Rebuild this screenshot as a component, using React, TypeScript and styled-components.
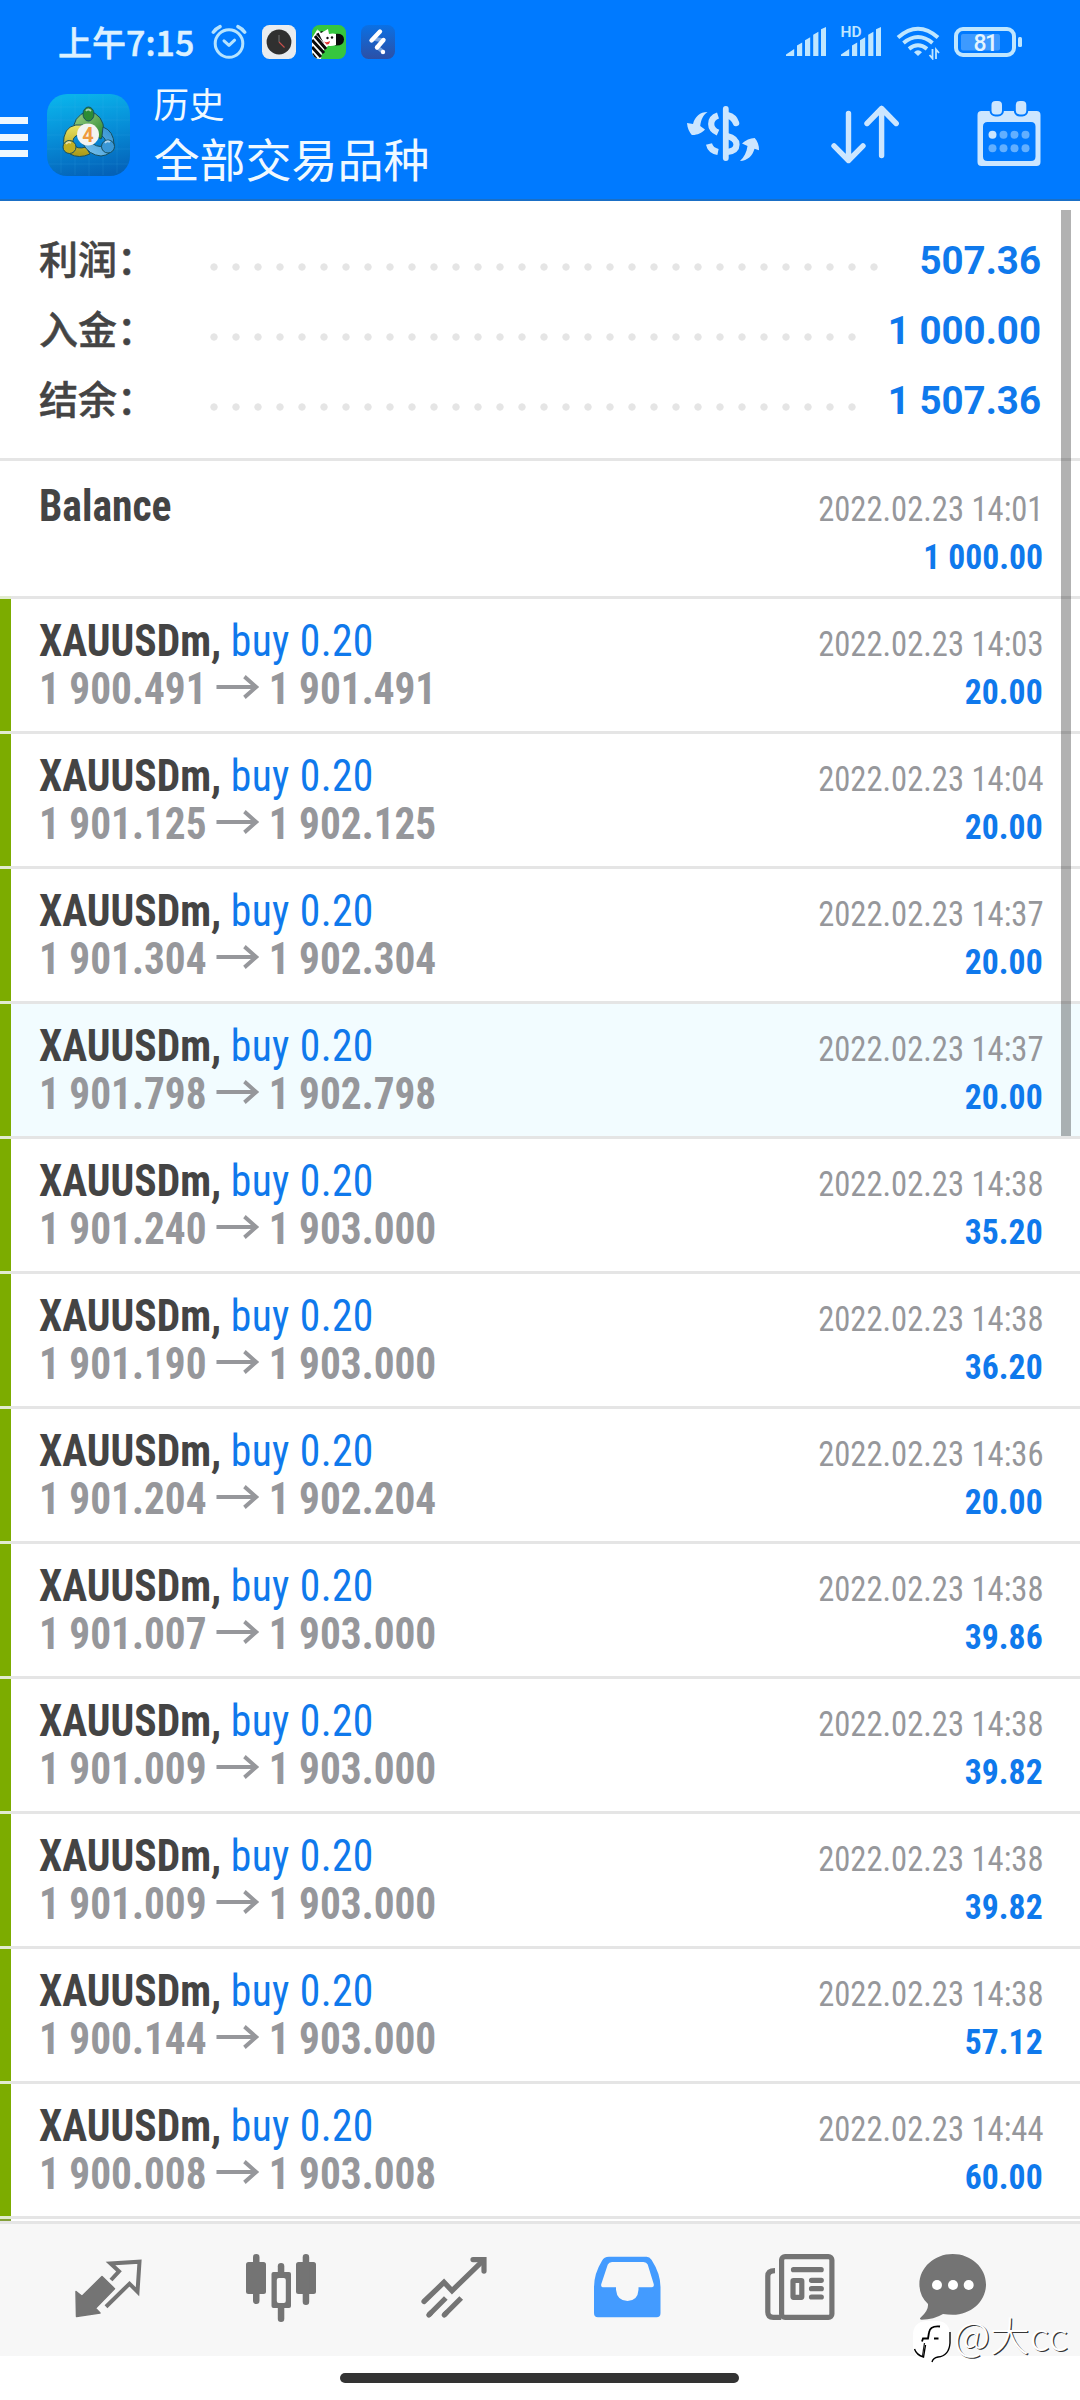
import React from "react";
import styled, { createGlobalStyle } from "styled-components";

const SANS = `Roboto, "Noto Sans CJK SC", sans-serif`;
const CJK = `"Noto Sans CJK SC", Roboto, sans-serif`;
const BLUE = "#0f79ec";
const LINE = "#e5e5e5";
const ICE = "#cce6ff";
const NAV = "#747474";

const GlobalStyle = createGlobalStyle`
  *, *::before, *::after { box-sizing: border-box; }
  body { margin: 0; background: #fff; }
  svg { display: block; flex: none; }
`;

const Screen = styled.div`
  position: relative;
  display: flex;
  flex-direction: column;
  width: 1080px;
  height: 2400px;
  overflow: hidden;
  background: #fff;
  font-family: ${SANS};
`;

/* ---------- top ---------- */

const Header = styled.header`
  height: 201px;
  background: #007aff;
  border-bottom: 2px solid #1a6fc6;
`;

const StatusBar = styled.div`
  display: flex;
  align-items: center;
  justify-content: space-between;
  height: 84px;
  padding: 0 58px 0 58px;
`;

const StatusGroup = styled.div<{ $gap: number }>`
  display: flex;
  align-items: center;
  gap: ${(p) => p.$gap}px;
`;

const Time = styled.span`
  width: 137px;
  font: 500 34px/50px ${CJK};
  -webkit-text-stroke: 0.5px #dcf1ff;
  color: #dcf1ff;
  white-space: nowrap;
`;

const HeaderBar = styled.div`
  display: flex;
  align-items: flex-start;
  height: 115px;
`;

const Menu = styled.div`
  display: flex;
  flex-direction: column;
  gap: 9.5px;
  width: 47px;
  padding-top: 33px;
`;

const MenuLine = styled.span`
  width: 27.5px;
  height: 7px;
  background: #eef8ff;
`;

const AppIcon = styled.svg`
  margin-top: 10px;
`;

const Titles = styled.div`
  flex: 1;
  padding-left: 23.5px;
  color: #f0f9ff;
  font-family: ${CJK};
  white-space: nowrap;
`;

const Caption = styled.div`
  font-size: 35.5px;
  line-height: 37px;
`;

const Title = styled.div`
  padding-top: 5px;
  font-size: 46px;
  line-height: 62px;
`;

const Tools = styled.div`
  display: flex;
  gap: 68.5px;
  padding: 10px 35.5px 0 0;
`;

/* ---------- summary ---------- */

const Summary = styled.section`
  height: 260px;
  padding: 21px 39px 0 39px;
  border-bottom: 3px solid ${LINE};
`;

const SummaryRow = styled.div`
  display: flex;
  align-items: baseline;
  height: 70px;
`;

const Label = styled.span`
  width: 170.5px;
  font: 500 39px/70px ${CJK};
  -webkit-text-stroke: 0.5px #444;
  color: #444;
`;

const Dots = styled.span`
  flex: 1;
  align-self: flex-start;
  height: 8px;
  margin: 41px 30px 0 0;
  background: radial-gradient(circle at 4px 4px, ${LINE} 3.3px, transparent 4px) 0 0 / 22px 8px repeat-x;
`;

const Total = styled.span`
  font: 700 38.5px/70px ${SANS};
  color: ${BLUE};
  white-space: pre;
`;

/* ---------- deals ---------- */

const List = styled.main`
  display: flex;
  flex-direction: column;
  height: 1760px;
  overflow: hidden;
`;

const Row = styled.div<{ $tall?: boolean; $selected?: boolean }>`
  display: flex;
  flex: none;
  height: ${(p) => (p.$tall ? 138 : 135)}px;
  background: ${(p) => (p.$selected ? "#f2fcff" : "#fff")};
`;

const Strip = styled.span<{ $color: string }>`
  width: 11px;
  background: ${(p) => p.$color};
  border-bottom: 3px solid #e1ebcf;
`;

const Cell = styled.div<{ $tall?: boolean }>`
  flex: 1;
  padding: ${(p) => (p.$tall ? 21 : 18)}px 38px 0 28px;
  border-bottom: 3px solid ${LINE};
  font-stretch: 75%;
`;

const Line = styled.div`
  display: flex;
  align-items: baseline;
  height: 48px;
  font-size: 44px;
  line-height: 48px;
  white-space: pre;

  /* keeps both lines on the same baseline when the left side is empty */
  &::before {
    content: "\\200b";
    width: 0;
  }
`;

const Symbol = styled.span`
  font-weight: 700;
  color: #444;
  transform: scaleX(0.945);
  transform-origin: left;
`;

const Side = styled.span`
  font-weight: 400;
  letter-spacing: 0.4px;
  color: ${BLUE};
`;

const Stamp = styled.span`
  margin: 0 -1.5px 0 auto;
  font-size: 35.5px;
  color: #96979b;
  transform: scaleX(0.918);
  transform-origin: right;
`;

const Prices = styled.span`
  display: flex;
  align-items: baseline;
  font-weight: 700;
  color: #96979b;
  transform: scaleX(0.938);
  transform-origin: left;
`;

const PriceArrow = styled.svg`
  align-self: flex-start;
  margin: 10px 9.5px 0 10.8px;
`;

const Profit = styled.span`
  margin: 0 -1px 0 auto;
  font-size: 35.75px;
  font-weight: 700;
  color: ${BLUE};
  transform: scaleX(0.942);
  transform-origin: right;
`;

const NextRowEdge = styled.span`
  width: 11px;
  height: 2px;
  background: #84a03a;
`;

const Scrollbar = styled.div`
  position: absolute;
  top: 210px;
  right: 9px;
  width: 10px;
  height: 926px;
  background: rgba(0, 0, 0, 0.3);
`;

/* ---------- bottom ---------- */

const NavBar = styled.nav`
  display: flex;
  align-items: center;
  height: 135px;
  padding: 0 0 4px 21.5px;
  background: #f7f7f7;
  border-top: 3px solid ${LINE};
`;

const Tab = styled.span<{ $w?: number }>`
  display: flex;
  justify-content: center;
  width: ${(p) => p.$w ?? 173}px;
`;

const Gesture = styled.footer`
  flex: 1;
  display: flex;
  justify-content: center;
  align-items: flex-start;
  padding: 17px 1px 0 0;
`;

const GestureBar = styled.span`
  width: 399px;
  height: 10px;
  border-radius: 5px;
  background: #333;
`;

const Watermark = styled.div`
  position: absolute;
  left: 912px;
  top: 2318px;
  display: flex;
  align-items: flex-start;
  gap: 2px;
  font: 300 39.5px/31px ${CJK};
  color: #fff;
  text-shadow: 1.2px 1.2px 0.6px rgba(0, 0, 0, 0.8);
  white-space: nowrap;
`;

const AlarmIcon = () => (
  <svg width="36" height="36" viewBox="211 25 36 36" fill="none" stroke="#b5e3ff" strokeLinecap="round">
    <circle cx="229" cy="44.5" r="13.8" strokeWidth="3" />
    <path d="M224 41.8l5 4.6 5.6-5.2" strokeWidth="3" strokeLinejoin="round" />
    <path d="M213.3 33.2q2.8-3.8 6.8-5.6M244.7 33.2q-2.8-3.8-6.8-5.6" strokeWidth="3.4" />
  </svg>
);

const ClockIcon = () => (
  <svg width="34" height="34" viewBox="0 0 34 34">
    <rect width="34" height="34" rx="7.5" fill="#e9ecef" />
    <circle cx="17" cy="17" r="12.4" fill="#303030" />
    <path d="M17 17V10" stroke="#555" strokeWidth="1.8" />
    <path d="M17 17l5.5 5.5" stroke="#c9504c" strokeWidth="1.1" />
  </svg>
);

const ZebraIcon = () => (
  <svg width="34" height="34" viewBox="0 0 34 34">
    <clipPath id="zebra"><rect width="34" height="34" rx="7.5" /></clipPath>
    <g clipPath="url(#zebra)">
      <rect width="34" height="34" fill="#36c63f" />
      <path d="M0 13l5-8 8 5 3 11-6 6-1 7H0z" fill="#fff" />
      <path d="M0 15l12 13M0 22l9 10M3 11l11 13M0 29l4 5" stroke="#0b0b0b" strokeWidth="3" />
      <path d="M4 9l6-3 5 4-3 8z" fill="#0b0b0b" />
      <path d="M23 9q9-1 9 5.500t-9 6z" fill="#0b0b0b" />
      <path d="M5 4l4 4 7-4 1 5q4-1 7 0v11q-6 2-11 0l-4-7z" fill="#fff" />
      <circle cx="15.500" cy="13" r="1.200" fill="#111" />
      <circle cx="20" cy="12.500" r="1.200" fill="#111" />
      <path d="M12 16.500q3 1.500 6-.5-.5 4-3.500 3.500z" fill="#e33434" />
    </g>
  </svg>
);

const FlashIcon = () => (
  <svg width="34" height="34" viewBox="0 0 34 34" strokeLinecap="round">
    <defs>
      <linearGradient id="flash" x1="0" y1="0" x2="0" y2="1">
        <stop offset="0" stopColor="#0a70e4" />
        <stop offset="1" stopColor="#2c50a6" />
      </linearGradient>
    </defs>
    <rect width="34" height="34" rx="7.5" fill="url(#flash)" />
    <path d="M14 14l6 1M16 22l5 4" stroke="#7aa6e4" strokeWidth="4" />
    <path d="M10.5 15.5l8.5-9M16 22.5l6.5-7.5" stroke="#fff" strokeWidth="4.4" />
    <circle cx="22" cy="27" r="2.2" fill="#fff" />
  </svg>
);

const SignalIcon = ({ hd }: { hd?: boolean }) => (
  <svg width="41" height="34" viewBox="0 0 41 34" fill="#bfe6ff">
    <path d="M0 31V29.500L8.200 24V31zM11 31V20.500l5.200-3V31zM19 31V15.200l5.200-3V31zM27.200 31V9.800l5.200-3V31zM35 31V4.200L40 2V31z" />
    {hd && (
      <text x="-0.500" y="12.400" fontFamily="Roboto, sans-serif" fontSize="15.500" fontWeight="600">HD</text>
    )}
  </svg>
);

const WifiIcon = () => (
  <svg width="44" height="36" viewBox="895 25 44 36" fill="none" stroke="#bfe6ff" strokeWidth="4">
    <path d="M897 38.500q20-17.500 40 0M902.500 44q14.500-12 29 0M908 49.800q9-7 18 0" />
    <path d="M917 57l-4-3.800q4-3.800 8 0z" fill="#bfe6ff" stroke="none" />
    <path d="M931.500 50v9.500l-3-3.500M935 60v-9.500l3 3.500" strokeWidth="1.800" />
  </svg>
);

const BatteryIcon = () => (
  <svg width="68" height="30" viewBox="0 0 68 30">
    <rect x="2" y="2" width="58" height="26" rx="7" fill="none" stroke="#bfe6ff" strokeWidth="4" />
    <rect x="64" y="10" width="4" height="10" rx="1.500" fill="#bfe6ff" />
    <rect x="7" y="7" width="39" height="16.500" rx="2" fill="#3d9aff" />
    <text x="31" y="23.800" textAnchor="middle" fontFamily="Roboto, sans-serif" fontSize="23" fontWeight="500" fill="#e4f5ff" letterSpacing="-1.500">81</text>
  </svg>
);

const TerminalIcon = () => (
  <AppIcon width="83" height="82" viewBox="0 0 83 82">
    <defs>
      <linearGradient id="tile" x1="0.4" y1="0" x2="0.6" y2="1">
        <stop offset="0" stopColor="#0ab2ea" />
        <stop offset="0.5" stopColor="#078bd6" />
        <stop offset="1" stopColor="#0462b8" />
      </linearGradient>
      <linearGradient id="green" x1="0" y1="0" x2="1" y2="1">
        <stop offset="0" stopColor="#a5d68a" />
        <stop offset="1" stopColor="#24852c" />
      </linearGradient>
      <linearGradient id="gold" x1="0" y1="0" x2="0" y2="1">
        <stop offset="0" stopColor="#ece564" />
        <stop offset="1" stopColor="#a89714" />
      </linearGradient>
      <linearGradient id="azure" x1="1" y1="0" x2="0" y2="1">
        <stop offset="0" stopColor="#2f8fd0" />
        <stop offset="1" stopColor="#7cc4ee" />
      </linearGradient>
    </defs>
    <rect width="83" height="82" rx="20" fill="url(#tile)" />
    <path d="M14 3v76M28 1v80M42 0v82M56 1v80M70 3v76M2 13h79M0 26h83M0 41h83M0 55h83M2 70h79" stroke="#4cc0f4" strokeOpacity="0.14" />
    <g stroke="#174f5e" strokeWidth="1">
      <path d="M26 40q-1-18 15-23 16 3 16 21l-3 7-7-4q2-10-6-11-7 1-7 8z" fill="url(#green)" />
      <path d="M36 31q-16-2-19 12-2 10 6 17 9 5 20 0l-4-7q-9 3-13-3-1-8 6-9z" fill="url(#gold)" />
      <path d="M56 33q11 4 11 18-2 10-13 11-12-1-18-12l7-3q6 7 14 5 4-6-2-10z" fill="url(#azure)" />
      <ellipse cx="41.500" cy="20" rx="5.500" ry="7" fill="#2c8c35" />
      <ellipse cx="22.500" cy="53" rx="6.500" ry="6.500" fill="#bfae22" />
      <ellipse cx="61" cy="52.500" rx="6.500" ry="6.500" fill="#3a97d6" />
    </g>
    <path d="M39 17q2-3 5 0M19 50q2-3 5-1M58 49q2-3 5-1" stroke="#fff" strokeOpacity="0.6" strokeWidth="1.800" fill="none" />
    <circle cx="41" cy="40.500" r="11" fill="#f4f4f2" />
    <text x="41" y="48" textAnchor="middle" fontFamily="Roboto, sans-serif" fontSize="20" fontWeight="700" fill="#ef9a3e">4</text>
  </AppIcon>
);

const CurrencyIcon = () => (
  <svg width="74" height="74" viewBox="685 94 74 74" fill="none" stroke={ICE}>
    <path d="M724.800 109v49" strokeWidth="5.800" strokeLinecap="round" />
    <path d="M735 123c-1.500-4.500-4-6.500-8-7.500" strokeWidth="6.500" strokeLinecap="round" />
    <path d="M717 115.500c-4.500 1.500-6.800 4.500-6.800 8.500s2.500 6.800 6.800 8.700M726 136c6 1.500 9.500 4.500 9.500 8.500 0 4.500-3.500 6.800-9 7.500M708 144c1 4.500 4 7 9 8" strokeWidth="6.200" />
    <path d="M706.500 112c-7.500 0-12.500 4.500-14.500 12l-6-1c.3 5 2.500 9.500 4.800 12 5 .3 10-2 13.200-5.500l-4.800-3.500c.8-6.500 3-11 7.300-14z" fill={ICE} stroke="none" />
    <path d="M739 161c7.500-.5 12.500-5 14.500-12.300l4.500 1.500c.2-4.500-1.500-9-4.300-12.200-4.700.3-9 2-12.700 5.500l5.500 2.500c-.8 6-3.500 11.500-7.500 15z" fill={ICE} stroke="none" />
  </svg>
);

const SortIcon = () => (
  <svg width="74" height="74" viewBox="828 94 74 74" fill="none" stroke={ICE} strokeWidth="5.400" strokeLinecap="round" strokeLinejoin="round">
    <path d="M848.500 113.500v47M834 145.800l14.500 14.700 14.500-14.700M881.600 155.500v-47M867 123.500l14.600-15 14.600 15" />
  </svg>
);

const CalendarIcon = () => (
  <svg width="74" height="74" viewBox="970.500 94 74 74">
    <path fillRule="evenodd" fill={ICE} d="M981 111h55q4 0 4 4v47q0 4-4 4h-55q-4 0-4-4v-47q0-4 4-4zM987 122q-4.500 0-4.500 4.500v30q0 4.500 4.500 4.500h43.500q4.500 0 4.500-4.500v-30q0-4.500-4.500-4.500z" />
    {[991, 1015.3].map((x) => (
      <rect key={x} x={x - 1} y="100" width="12.500" height="15.500" rx="5" fill={ICE} stroke="#007aff" strokeWidth="2" />
    ))}
    {[134.7, 148.3].map((y, r) =>
      [992, 1003, 1014, 1025].map((x, c) => (
        <circle key={x} cx={x} cy={y} r="4" fill={r + c === 0 ? ICE : "#62afff"} />
      ))
    )}
  </svg>
);

const QuotesIcon = () => (
  <svg width="88" height="88" viewBox="64 2244 88 88">
    <path d="M76 2291.500l6 4.800 20-19.800 12.500 12.200-19 19.500 4.500 4.800-23.500 3.500z" fill={NAV} stroke={NAV} strokeWidth="1.500" strokeLinejoin="round" />
    <path d="M111 2280l8-8.700-8.500-7.800 29-1.800-2 30-8-8-23.500 23" fill="none" stroke={NAV} strokeWidth="4" />
  </svg>
);

const CandlesIcon = () => (
  <svg width="88" height="88" viewBox="237 2244 88 88" fill={NAV}>
    <rect x="246" y="2262" width="20" height="32" rx="2.500" />
    <rect x="253" y="2254" width="6.500" height="50" rx="3.200" />
    <rect x="296" y="2262" width="20" height="32" rx="2.500" />
    <rect x="302.700" y="2254" width="6.500" height="51" rx="3.200" />
    <rect x="277.800" y="2263" width="6.500" height="59" rx="3.200" />
    <rect x="271.500" y="2272" width="19.500" height="36" rx="2" />
    <rect x="276.800" y="2278" width="9" height="25" rx="2" fill="#f7f7f7" />
  </svg>
);

const TrendIcon = () => (
  <svg width="88" height="88" viewBox="410 2244 88 88" fill="none" stroke={NAV} strokeWidth="5.200">
    <path d="M424 2301.500l20-19.200 8 8.400 31-30" strokeLinecap="round" />
    <path d="M473 2259.600h11v11.500" strokeLinecap="round" />
    <path d="M428.800 2315l17-17M444.200 2315l17-17" />
    <path d="M428.800 2315l2-2M444.200 2315l2-2" strokeLinecap="round" />
  </svg>
);

const InboxIcon = () => (
  <svg width="88" height="88" viewBox="583 2244 88 88">
    <path fillRule="evenodd" fill="#439bff" d="M609 2256.700h37.500q3 0 5 3 9 14 9 27.300v26q0 4.300-4 4.300h-58.500q-4 0-4-4.300v-26q0-13.300 8-26.300 2-4 7-4zM612 2262q-3 0-4.200 2.500l-6.500 19.500q-.8 3.200 1.700 3.200h13v2.500q1 11 11.500 11.200 10.300-.2 11-11.200v-2.500h13q3 0 2.200-3.200l-6-19.500q-1.200-2.500-4.200-2.500z" />
  </svg>
);

const NewsIcon = () => (
  <svg width="88" height="88" viewBox="757 2244 88 88" fill="none" stroke={NAV} strokeWidth="5.200">
    <rect x="782.600" y="2256.600" width="50.300" height="60.800" rx="3.500" />
    <path d="M776 2270.600q-7.200 0-7.200 5.500v36q0 5.300 5.500 5.300h8" />
    <path d="M794.500 2269.700h27.700M812.500 2280.300h9.800M812.500 2288.700h9.800M812.500 2297h9.800" strokeLinecap="round" />
    <rect x="794" y="2280.500" width="8.800" height="16.800" rx="0.500" />
  </svg>
);

const ChatIcon = () => (
  <svg width="88" height="88" viewBox="909 2244 88 88">
    <path d="M952.700 2254c18.400 0 33.300 13.600 33.300 30.400s-14.900 30.400-33.300 30.400q-5 0-9.700-.8-9 5.500-21.500 5.800-2.800-.3-.8-2.300 8-7 7.300-13.500-8.600-8-8.600-19.600c0-16.800 14.900-30.400 33.300-30.400z" fill={NAV} />
    {[937, 953, 968.7].map((x) => (
      <circle key={x} cx={x} cy="2285" r="5" fill="#fff" />
    ))}
  </svg>
);

const BadgeIcon = () => (
  <svg width="40" height="46" viewBox="912 2319 40 46">
    <path d="M926 2322h12q12 1 12 14v8q0 13-12 14l-7 5 1-6q-8 0-9 3-9-2-10-12v-12q0-13 13-14z" fill="#fff" />
    <path d="M950 2333v11q-1 13-12 14-5 1-6 5M914.500 2350q2 6 9 8l2-12" fill="none" stroke="#000" strokeWidth="1.400" />
    <path d="M940 2327.500q-10-1-11 6l-1 6h-5l-1 3M934 2339.500h4.500" fill="none" stroke="#000" strokeWidth="1.800" />
    <path d="M924.500 2344l-2 13" stroke="#222" strokeWidth="1.300" />
  </svg>
);

const totals = [
  ["利润：", "507.36"],
  ["入金：", "1 000.00"],
  ["结余：", "1 507.36"],
];

const deals = [
  { from: "1 900.491", to: "1 901.491", time: "14:03", profit: "20.00" },
  { from: "1 901.125", to: "1 902.125", time: "14:04", profit: "20.00" },
  { from: "1 901.304", to: "1 902.304", time: "14:37", profit: "20.00" },
  { from: "1 901.798", to: "1 902.798", time: "14:37", profit: "20.00", selected: true },
  { from: "1 901.240", to: "1 903.000", time: "14:38", profit: "35.20" },
  { from: "1 901.190", to: "1 903.000", time: "14:38", profit: "36.20" },
  { from: "1 901.204", to: "1 902.204", time: "14:36", profit: "20.00" },
  { from: "1 901.007", to: "1 903.000", time: "14:38", profit: "39.86" },
  { from: "1 901.009", to: "1 903.000", time: "14:38", profit: "39.82" },
  { from: "1 901.009", to: "1 903.000", time: "14:38", profit: "39.82" },
  { from: "1 900.144", to: "1 903.000", time: "14:38", profit: "57.12" },
  { from: "1 900.008", to: "1 903.008", time: "14:44", profit: "60.00" },
];

export default function App() {
  return (
    <Screen>
      <GlobalStyle />
      <Header>
        <StatusBar>
          <StatusGroup $gap={15.5}>
            <Time>上午7:15</Time>
            <AlarmIcon />
            <ClockIcon />
            <ZebraIcon />
            <FlashIcon />
          </StatusGroup>
          <StatusGroup $gap={14}>
            <SignalIcon />
            <SignalIcon hd />
            <WifiIcon />
            <BatteryIcon />
          </StatusGroup>
        </StatusBar>
        <HeaderBar>
          <Menu>
            <MenuLine />
            <MenuLine />
            <MenuLine />
          </Menu>
          <TerminalIcon />
          <Titles>
            <Caption>历史</Caption>
            <Title>全部交易品种</Title>
          </Titles>
          <Tools>
            <CurrencyIcon />
            <SortIcon />
            <CalendarIcon />
          </Tools>
        </HeaderBar>
      </Header>

      <Summary>
        {totals.map(([label, value]) => (
          <SummaryRow key={label}>
            <Label>{label}</Label>
            <Dots />
            <Total>{value}</Total>
          </SummaryRow>
        ))}
      </Summary>

      <List>
        <Row $tall>
          <Strip $color="#fff" />
          <Cell $tall>
            <Line>
              <Symbol>Balance</Symbol>
              <Stamp>2022.02.23 14:01</Stamp>
            </Line>
            <Line>
              <Profit>1 000.00</Profit>
            </Line>
          </Cell>
        </Row>
        {deals.map((deal, i) => (
          <Row key={i} $selected={deal.selected}>
            <Strip $color="#7cac00" />
            <Cell>
              <Line>
                <Symbol>
                  XAUUSDm, <Side>buy 0.20</Side>
                </Symbol>
                <Stamp>2022.02.23 {deal.time}</Stamp>
              </Line>
              <Line>
                <Prices>
                  {deal.from}
                  <PriceArrow width="46" height="24" viewBox="0 0 46 24" fill="none" stroke="#96979b" strokeWidth="4.200">
                    <path d="M0 12H42.500M30 1.700L42.500 12 30 22.300" />
                  </PriceArrow>
                  {deal.to}
                </Prices>
                <Profit>{deal.profit}</Profit>
              </Line>
            </Cell>
          </Row>
        ))}
        <NextRowEdge />
      </List>

      <NavBar>
        <Tab><QuotesIcon /></Tab>
        <Tab><CandlesIcon /></Tab>
        <Tab><TrendIcon /></Tab>
        <Tab><InboxIcon /></Tab>
        <Tab><NewsIcon /></Tab>
        <Tab $w={132}><ChatIcon /></Tab>
      </NavBar>
      <Gesture>
        <GestureBar />
      </Gesture>

      <Scrollbar />
      <Watermark>
        <BadgeIcon />
        <span>@大cc</span>
      </Watermark>
    </Screen>
  );
}
